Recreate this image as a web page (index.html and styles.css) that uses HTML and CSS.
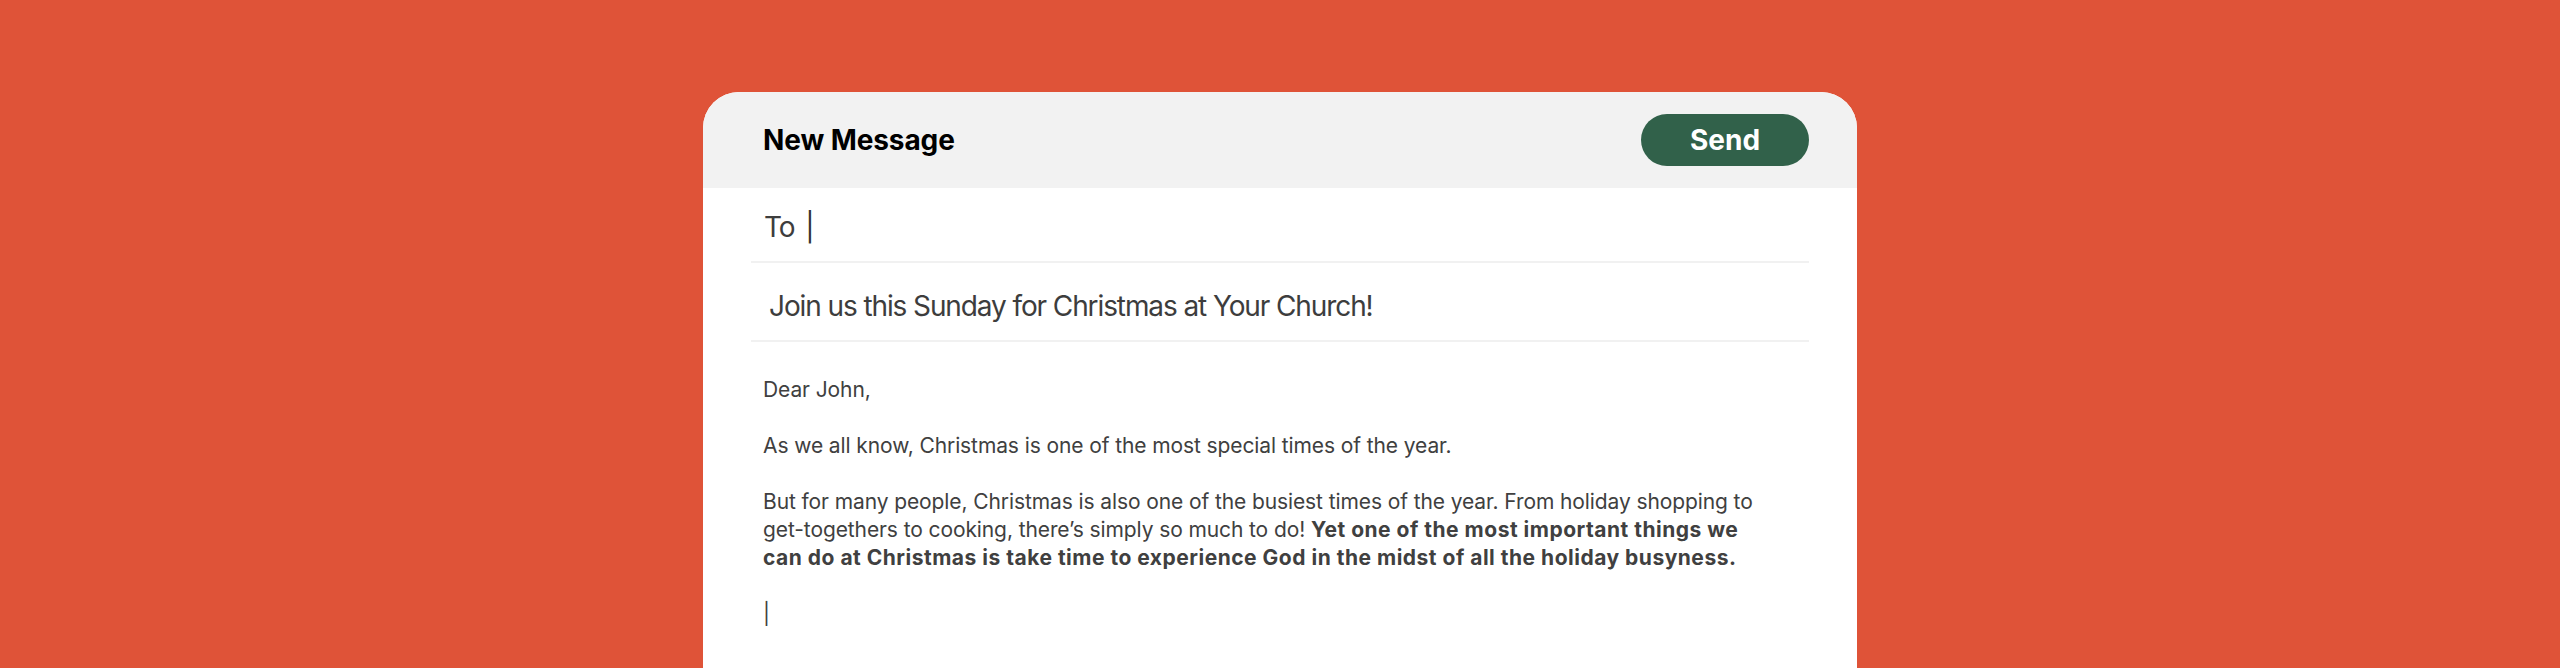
FILE: index.html
```html
<!DOCTYPE html>
<html lang="en">
<head>
<meta charset="utf-8">
<title>New Message</title>
<link rel="stylesheet" href="styles.css">
</head>
<body>
<div class="stage">
  <div class="card">
    <div class="card-header">
      <h1 class="title">New Message</h1>
      <button class="send-btn">Send</button>
    </div>
    <div class="field field-to">To <span class="caret">|</span></div>
    <div class="field field-subject">Join us this Sunday for Christmas at Your Church!</div>
    <div class="message">
      <p>Dear John,</p>
      <p>As we all know, Christmas is one of the most special times of the year.</p>
      <p>But for many people, Christmas is also one of the busiest times of the year. From holiday shopping to<br>get-togethers to cooking, there’s simply so much to do! <strong>Yet one of the most important things we<br>can do at Christmas is take time to experience God in the midst of all the holiday busyness.</strong></p>
      <p class="caret-line">|</p>
    </div>
  </div>
</div>
</body>
</html>
```
FILE: styles.css
```css
html, body {
  margin: 0;
  padding: 0;
}
body {
  background: #df5338;
  font-family: Inter, "Noto Sans", sans-serif;
  overflow: hidden;
  height: 668px;
}
.stage {
  display: flex;
  justify-content: center;
  padding-top: 92px;
}
.card {
  width: 1154px;
  background: #ffffff;
  border-radius: 36px 36px 0 0;
  overflow: hidden;
  min-height: 700px;
}
.card-header {
  height: 96px;
  background: #f2f2f2;
  display: flex;
  align-items: center;
  justify-content: space-between;
  padding: 0 48px 0 60px;
}
.title {
  margin: 0;
  font-size: 28px;
  font-weight: 700;
  color: #000;
  letter-spacing: -0.1px;
}
.send-btn {
  width: 168px;
  height: 52px;
  border: none;
  border-radius: 26px;
  background: #31614a;
  color: #fff;
  font-family: Inter, "Noto Sans", sans-serif;
  font-size: 28px;
  font-weight: 700;
  padding: 0;
}
.field {
  margin: 0 48px;
  font-size: 28px;
  line-height: 34px;
  color: #3d3d3d;
  border-bottom: 2px solid #f1f1f1;
  letter-spacing: -1.1px;
}
.field-to {
  padding: 22px 0 17px 13px;
}
.field-subject {
  padding: 26px 0 17px 18px;
}
.caret {
  color: #333;
  margin-left: 4px;
}
.message {
  padding: 34px 48px 0 60px;
  font-size: 21px;
  line-height: 28px;
  color: #404040;
  letter-spacing: -0.1px;
}
.message p {
  margin: 0 0 28px;
}
.message strong {
  font-weight: 700;
  letter-spacing: 0.5px;
}
```
